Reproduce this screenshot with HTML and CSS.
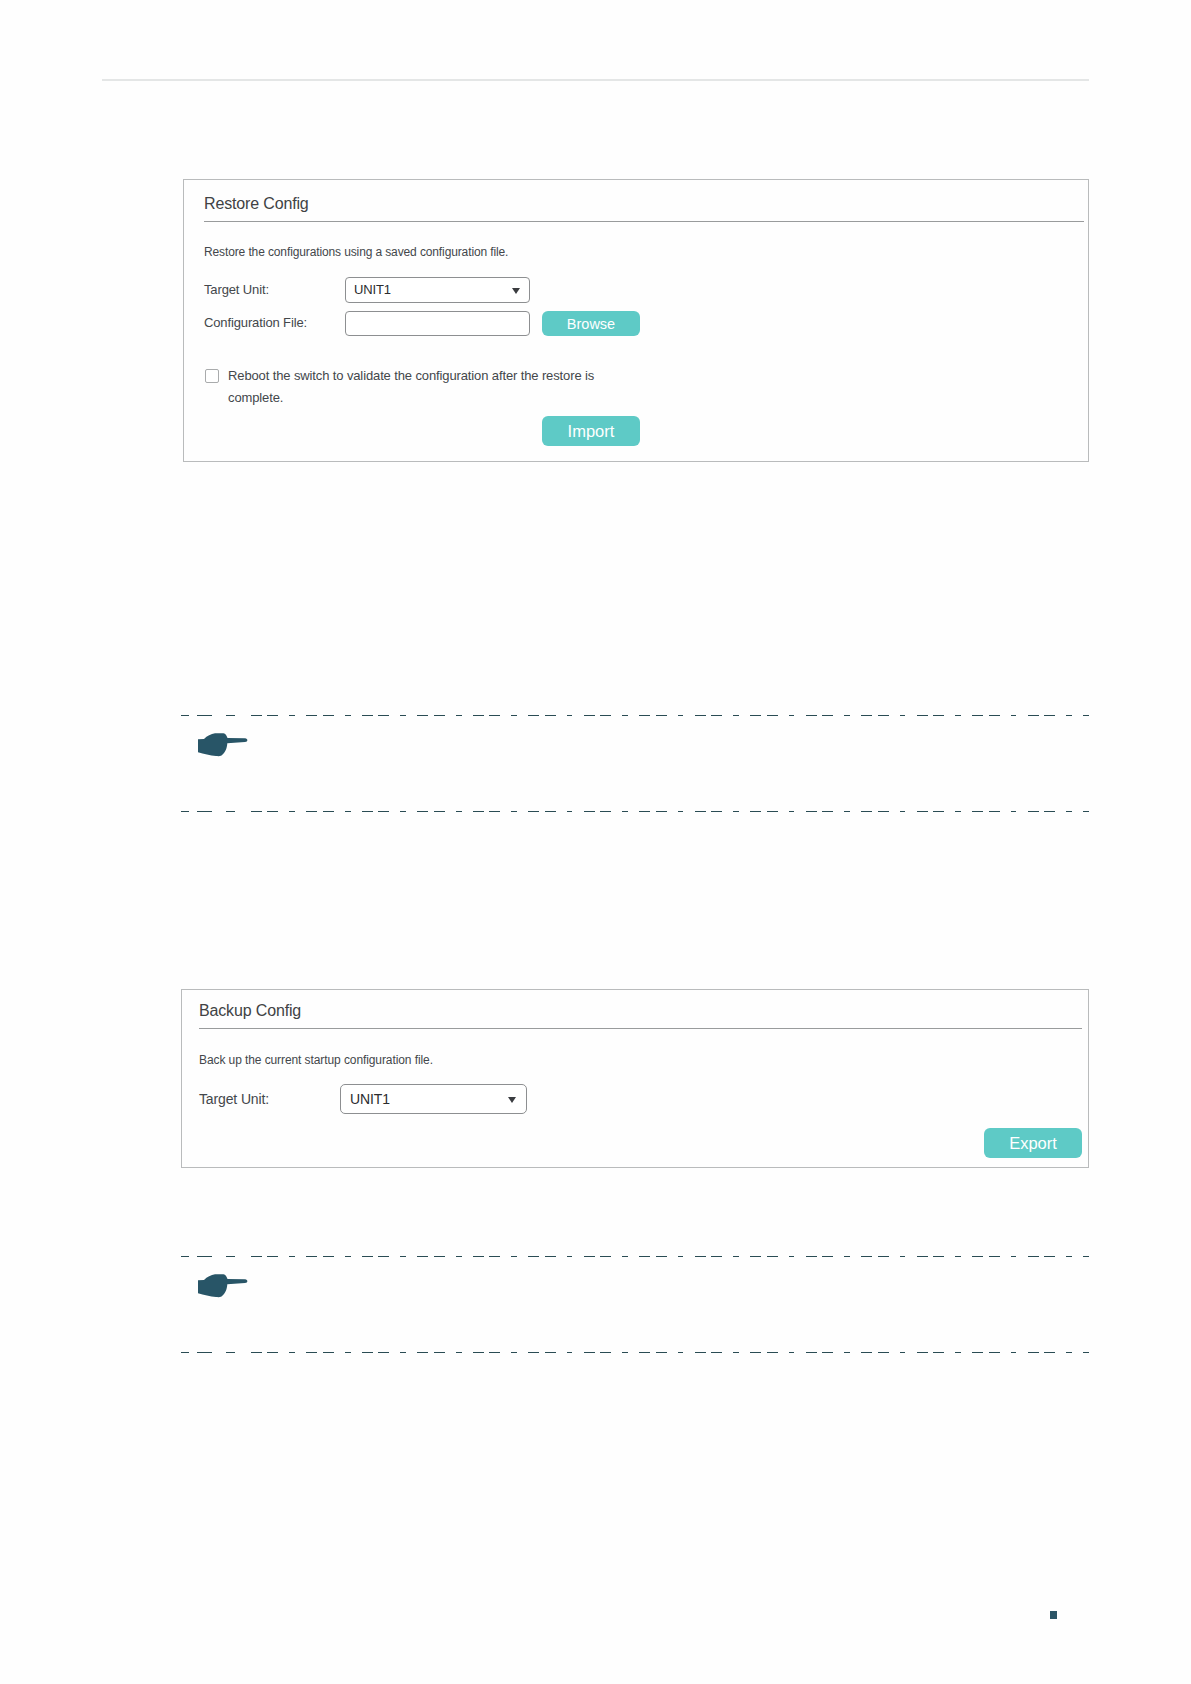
FILE: index.html
```html
<!DOCTYPE html>
<html lang="en">
<head>
    <meta charset="UTF-8">
    <title>Restore and Backup Config</title>
    <link rel="stylesheet" href="styles.css">
</head>
<body>
    <svg class="symbols" width="0" height="0">
        <symbol id="rule" viewBox="0 0 908 1">
            <path d="M0 .5h8M16 .5h15M45 .5h9"/>
            <path d="M69.7 .5H908" stroke-dasharray="11.2 5.2 11.2 11.1 5.6 11.2"/>
        </symbol>
        <symbol id="hand" viewBox="0 0 50 24">
            <path d="M0 6.3 6 6C9 3 13 .8 17 .3H25.5C27.5 .8 28.5 2.5 29.5 5L47 5.3C50 5.5 50.3 8.6 47 9L29.3 10.3C29 15 27.5 19.5 23.5 22.5 22 23.3 20 23.2 18 23 12 22.6 6 21 0 19.3Z"/>
        </symbol>
    </svg>

    <div class="page">
        <hr class="page-line">

        <form class="panel restore">
            <h2>Restore Config</h2>
            <p class="desc">Restore the configurations using a saved configuration file.</p>
            <div class="row">
                <span class="label">Target Unit:</span>
                <div class="select">UNIT1 <i class="arrow"></i></div>
            </div>
            <div class="row file-row">
                <label class="label" for="file">Configuration File:</label>
                <input type="text" id="file">
                <button type="button" class="browse">Browse</button>
            </div>
            <div class="check-row">
                <input type="checkbox" id="reboot">
                <label for="reboot">Reboot the switch to validate the configuration after the restore is complete.</label>
            </div>
            <button type="button" class="import">Import</button>
        </form>

        <div class="note">
            <svg class="rule"><use href="#rule"/></svg>
            <svg class="hand"><use href="#hand"/></svg>
            <svg class="rule"><use href="#rule"/></svg>
        </div>

        <form class="panel backup">
            <h2>Backup Config</h2>
            <p class="desc">Back up the current startup configuration file.</p>
            <div class="row">
                <span class="label">Target Unit:</span>
                <div class="select">UNIT1 <i class="arrow"></i></div>
            </div>
            <button type="button" class="export">Export</button>
        </form>

        <div class="note">
            <svg class="rule"><use href="#rule"/></svg>
            <svg class="hand"><use href="#hand"/></svg>
            <svg class="rule"><use href="#rule"/></svg>
        </div>

        <div class="page-mark"></div>
    </div>
</body>
</html>
```
FILE: styles.css
```css
* {
    box-sizing: border-box;
}
body {
    margin: 0;
    background: #fefefe;
    font-family: "Liberation Sans", Arial, sans-serif;
    color: #43474b;
}
.symbols {
    display: none;
}
.page {
    display: flex;
    flex-direction: column;
    width: 1191px;
    height: 1684px;
    padding: 79px 102px 0;
}
.page-line {
    width: 987px;
    height: 2px;
    margin: 0;
    border: none;
    background: #e4e6e6;
}

/* panels */
.panel {
    display: flex;
    flex-direction: column;
    border: 1px solid #b9bbbc;
}
.restore {
    width: 906px;
    height: 283px;
    margin: 98px 0 0 81px;
    padding: 12px 4px 15px 20px;
    font-size: 13px;
    letter-spacing: -0.13px;
}
.backup {
    width: 908px;
    height: 179px;
    margin: 177px 0 0 79px;
    padding: 9px 6px 9px 17px;
    font-size: 14px;
    letter-spacing: -0.13px;
}
h2 {
    margin: 0;
    padding-bottom: 5px;
    border-bottom: 1px solid #999b9c;
    font-size: 16px;
    font-weight: normal;
    line-height: 24px;
    letter-spacing: -0.15px;
    color: #404244;
}
.desc {
    margin: 20px 0 15px;
    font-size: 12px;
    line-height: 20px;
    letter-spacing: -0.12px;
}
.backup .desc {
    margin: 21px 0 14px;
    letter-spacing: -0.09px;
}
.row {
    display: flex;
    align-items: center;
}
.label {
    width: 141px;
}
.restore .label {
    padding-bottom: 2px;
}
.select,
input[type="text"] {
    width: 185px;
    height: 26px;
    border: 1px solid #8d8f91;
    border-radius: 4px;
    background: #fff;
}
.select {
    display: flex;
    align-items: center;
    justify-content: space-between;
    padding: 0 9px 2px 8px;
    color: #2b2c2e;
}
.backup .select {
    width: 187px;
    height: 30px;
    padding: 0 10px 0 9px;
    border-radius: 5px;
}
.arrow {
    border: 4.5px solid transparent;
    border-top: 6px solid #3a3c40;
    border-bottom: none;
    margin-top: 3px;
}
.backup .arrow {
    margin-top: 1px;
}
.file-row {
    margin-top: 8px;
}
.file-row .label {
    letter-spacing: -0.13px;
}
.file-row input {
    height: 25px;
}
button {
    width: 98px;
    height: 30px;
    padding: 0;
    border: none;
    border-radius: 6px;
    background: #5ecac6;
    font-family: inherit;
    font-size: 16.5px;
    color: #fff;
}
.browse {
    height: 25px;
    margin-left: 12px;
    font-size: 14.5px;
}
.check-row {
    display: flex;
    gap: 9px;
    width: 410px;
    margin: 29px 0 7px 1px;
    line-height: 22px;
    letter-spacing: -0.12px;
}
input[type="checkbox"] {
    appearance: none;
    flex: none;
    width: 14px;
    height: 14px;
    margin: 4px 0 0;
    border: 1px solid #a9abac;
    border-radius: 2px;
    background: #fff;
}
.import {
    margin-left: 338px;
}
.export {
    align-self: flex-end;
    margin-top: 14px;
}

/* notes */
.note {
    display: flex;
    flex-direction: column;
    justify-content: space-between;
    width: 908px;
    height: 97px;
    margin: 253px 0 0 79px;
}
.backup + .note {
    margin-top: 88px;
}
.rule {
    width: 908px;
    height: 1px;
    stroke: #2a4c54;
    fill: none;
    shape-rendering: crispEdges;
}
.hand {
    width: 50px;
    height: 24px;
    margin: -37px 0 0 17px;
    fill: #285567;
}
.page-mark {
    width: 7px;
    height: 8px;
    margin: 258px 0 0 948px;
    background: #2b5566;
}
```
